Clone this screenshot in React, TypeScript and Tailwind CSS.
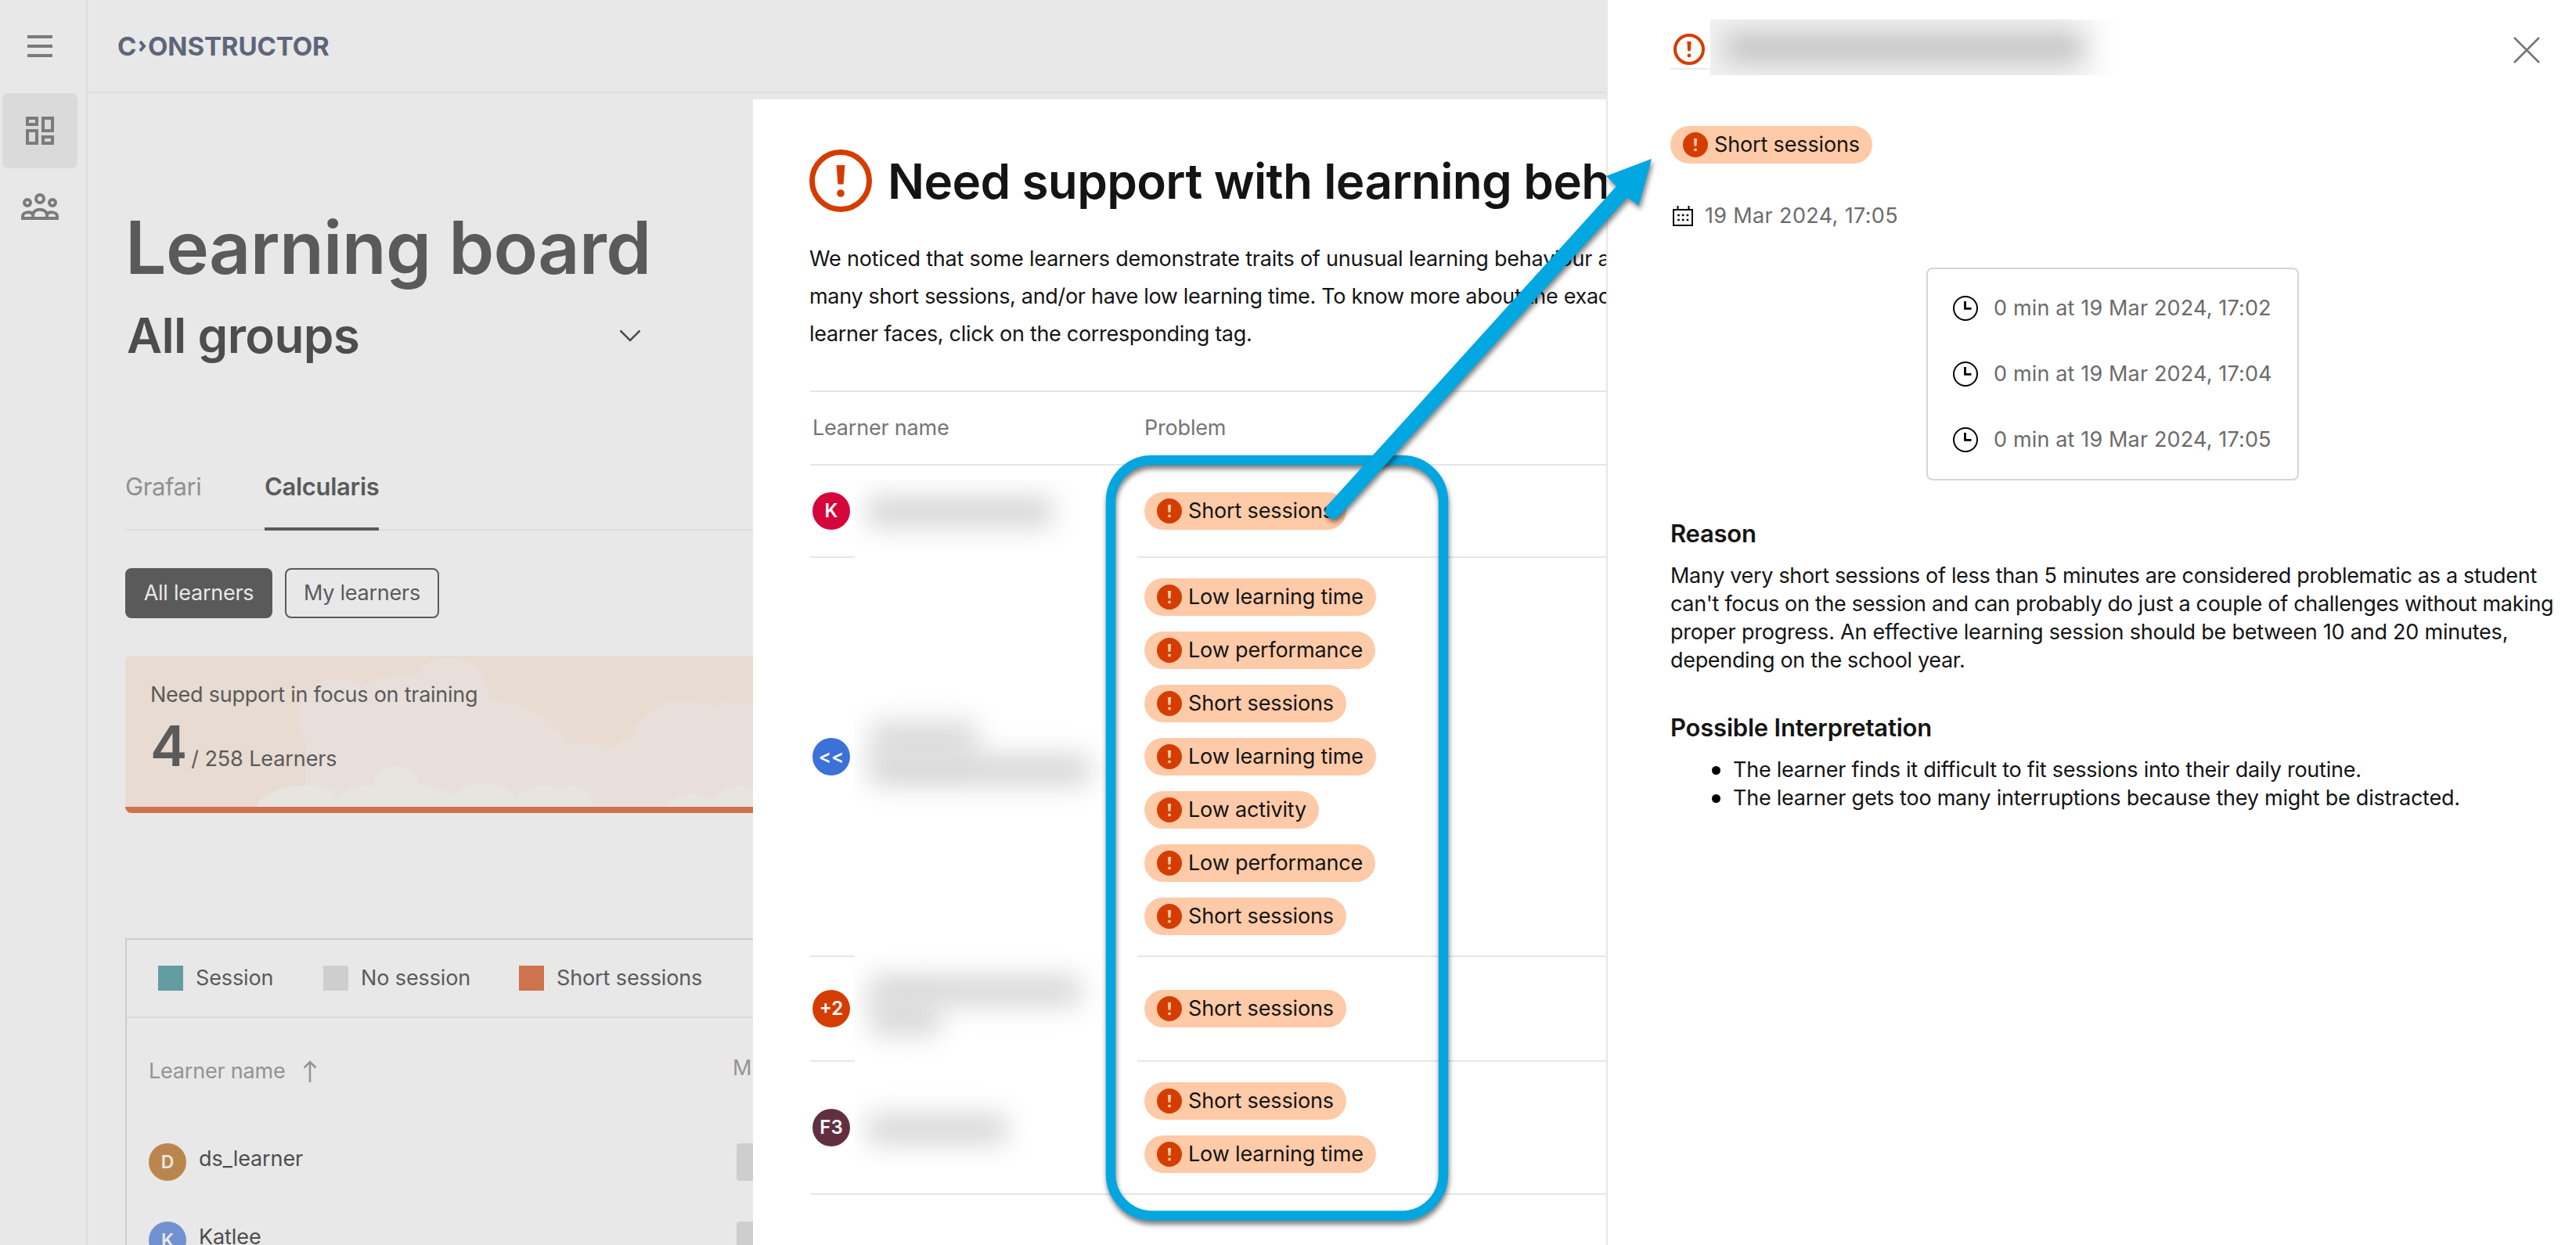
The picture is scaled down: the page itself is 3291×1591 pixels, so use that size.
type Learner = {
  initials: string;
  avatar: string;
  row: string;
  tags: string[];
};

const learners: Learner[] = [
  { initials: "K", avatar: "bg-[#d4063b]", row: "h-[118px]", tags: ["Short sessions"] },
  {
    initials: "<<",
    avatar: "bg-[#3c71d9]",
    row: "h-[510px]",
    tags: ["Low learning time", "Low performance", "Short sessions", "Low learning time", "Low activity", "Low performance", "Short sessions"],
  },
  { initials: "+2", avatar: "bg-[#d53d00]", row: "h-[134px]", tags: ["Short sessions"] },
  { initials: "F3", avatar: "bg-[#622f42]", row: "h-[170px]", tags: ["Short sessions", "Low learning time"] },
];

const legend = [
  { label: "Session", color: "bg-[#649ca4]", width: "w-[211px]" },
  { label: "No session", color: "bg-[#cecece]", width: "w-[250px]" },
  { label: "Short sessions", color: "bg-[#cf724e]", width: "w-[260px]" },
];

const boardRows = [
  { initial: "D", name: "ds_learner", color: "bg-[#bb864d]" },
  { initial: "K", name: "Katlee", color: "bg-[#7191d0]" },
];

const sessions = ["0 min at 19 Mar 2024, 17:02", "0 min at 19 Mar 2024, 17:04", "0 min at 19 Mar 2024, 17:05"];

function ExclamationMark() {
  return (
    <g>
      <path d="M17.3 10h5.4l-.9 12.3h-3.6z" />
      <circle cx="20" cy="28" r="2.4" />
    </g>
  );
}

function AlertOutline({ className, stroke }: { className: string; stroke: number }) {
  return (
    <svg viewBox="0 0 40 40" className={className} fill="#d53d00">
      <circle cx="20" cy="20" r={20 - stroke / 2} fill="none" stroke="#d53d00" strokeWidth={stroke} />
      <ExclamationMark />
    </svg>
  );
}

function Tag({ label }: { label: string }) {
  return (
    <div className="flex h-12 w-fit items-center gap-2 rounded-full bg-[#ffcaa7] px-4">
      <svg viewBox="0 0 40 40" className="size-8 shrink-0" fill="#ffcaa7">
        <circle cx="20" cy="20" r="20" fill="#d53d00" />
        <ExclamationMark />
      </svg>
      <span className="whitespace-nowrap text-[27px] leading-10 tracking-[-0.15px] text-[#141414]">{label}</span>
    </div>
  );
}

function Sidebar() {
  return (
    <aside className="flex w-28 shrink-0 flex-col border-r-2 border-[#dcdcdc] text-[#7b7b7b]">
      <div className="flex h-[119px] flex-col gap-2 pl-[35px] pt-[45px]">
        <div className="h-1 w-8 bg-[#7b7b7b]" />
        <div className="h-1 w-8 bg-[#7b7b7b]" />
        <div className="h-1 w-8 bg-[#7b7b7b]" />
      </div>
      <div className="ml-[3px] flex size-24 items-center justify-center rounded-lg bg-[#dadada]">
        <svg viewBox="0 0 36 36" className="size-9" fill="none" stroke="currentColor" strokeWidth="4">
          <path d="M2 2h12v8H2zM22 2h12v16H22zM2 18h12v16H2zM22 26h12v8H22z" />
        </svg>
      </div>
      <svg viewBox="0 0 48 34" className="ml-[27px] mt-8 h-[34px] w-12" fill="none" stroke="currentColor" strokeWidth="4">
        <circle cx="24" cy="7" r="5" />
        <circle cx="8" cy="12" r="4" />
        <circle cx="40" cy="12" r="4" />
        <path d="M2 32v-3c0-5 11-7 13.500-1M46 32v-3c0-5-11-7-13.500-1M15 32v-5c2-8.500 16-8.500 18 0v5M0 32h48" />
      </svg>
    </aside>
  );
}

function Clouds() {
  return (
    <svg viewBox="0 0 802 193" className="absolute left-0 top-0 h-[193px] w-[802px]">
      <path
        fill="#e8dfda"
        d="M232 193C229 170 230 140 232 116C218 88 217 55 235 44C250 25 285 25 301 40C318 28 350 23 372 26C380 10 395 2 414 2C442 2 468 25 464 56C512 60 550 82 569 115C588 111 612 112 625 119C630 110 638 105 649 103C660 65 700 48 752 65C768 58 788 58 802 65V193Z"
      />
      <path
        fill="#e8e4df"
        d="M167 193C182 162 255 155 272 183C280 170 298 166 317 165C322 134 370 134 376 164C396 166 408 170 419 179C435 157 485 157 499 183C510 167 538 162 555 171C575 161 594 168 598 193ZM691 193C703 175 735 172 752 186C760 165 785 162 802 172V193Z"
      />
    </svg>
  );
}

function Board() {
  return (
    <main className="flex flex-1 flex-col">
      <header className="flex h-[119px] shrink-0 items-center border-b-2 border-[#dcdcdc] pl-[38px] text-[33px] font-bold leading-10 text-[#5e6579]">
        <span className="w-[28px]">C</span>
        <svg viewBox="0 0 9 14" className="mr-0.5 h-3.5 w-[9px]" fill="none" stroke="currentColor" strokeWidth="4">
          <path d="M1 1l5 6-5 6" />
        </svg>
        <span className="tracking-[-0.1px]">ONSTRUCTOR</span>
      </header>

      <div className="flex flex-col pl-12 pt-[141px]">
        <h1 className="text-[93px] font-semibold leading-[112px] tracking-[-0.7px] text-[#5a5a5a]">Learning board</h1>
        <div className="mt-[19px] flex h-[76px] w-[659px] items-center justify-between pl-0.5">
          <h2 className="text-[62px] font-semibold leading-[76px] tracking-[-0.65px] text-[#4d4d4d]">All groups</h2>
          <svg viewBox="0 0 28 16" className="h-4 w-7" fill="none" stroke="#4d4d4d" strokeWidth="2.500">
            <path d="M1.500 1.500L14 14 26.500 1.500" />
          </svg>
        </div>

        <nav className="mt-[135px] flex h-[76px] border-b-2 border-[#dcdcdc] text-[31px] leading-10">
          <span className="w-[178px] tracking-[-0.4px] text-[#909090]">Grafari</span>
          <span className="-mb-0.5 h-[76px] border-b-4 border-[#5a5a5a] font-semibold tracking-[-0.3px] text-[#5a5a5a]">Calcularis</span>
        </nav>

        <div className="mt-12 flex gap-4 text-[27px] leading-10 tracking-[-0.25px]">
          <button className="flex h-16 w-[188px] items-center justify-center rounded-lg bg-[#5a5a5a] text-[#e8e8e8]">All learners</button>
          <button className="flex h-16 w-[197px] items-center justify-center rounded-lg border-2 border-[#5a5a5a] text-[#5a5a5a]">My learners</button>
        </div>

        <section className="relative mt-12 h-[201px] overflow-hidden rounded-lg border-b-8 border-[#cf724e] bg-[#e8dbd1] text-[#5a5a5a]">
          <Clouds />
          <div className="relative pl-8 pt-[30px]">
            <p className="text-[27px] leading-10 tracking-[-0.25px]">Need support in focus on training</p>
            <div className="mt-[5px] flex items-baseline gap-[5px]">
              <span className="text-[71px] font-semibold leading-[80px]">4</span>
              <span className="text-[27px] leading-10 tracking-[-0.1px]">/ 258 Learners</span>
            </div>
          </div>
        </section>

        <section className="mt-40 border-l-2 border-t-2 border-[#cdcdcd]">
          <div className="flex h-[100px] items-center border-b-2 border-[#dadada] pl-10">
            {legend.map((item) => (
              <div key={item.label} className={`flex items-center gap-4 ${item.width}`}>
                <div className={`size-8 ${item.color}`} />
                <span className="text-[27px] leading-10 tracking-[-0.12px] text-[#5a5a5a]">{item.label}</span>
              </div>
            ))}
          </div>
          <div className="flex h-[134px] pl-7 text-[27px] leading-10 tracking-[-0.2px] text-[#939393]">
            <div className="flex w-[746px] items-start pt-12">
              Learner name
              <svg viewBox="0 0 18 28" className="ml-[22px] mt-1.5 h-7 w-[18px]" fill="none" stroke="currentColor" strokeWidth="2.500">
                <path d="M9 28V2M1.500 9.500L9 2l7.500 7.500" />
              </svg>
            </div>
            <span className="pt-11">M</span>
          </div>
          {boardRows.map((row) => (
            <div key={row.name} className="flex h-[100px] items-center pl-7">
              <div className={`flex size-12 items-center justify-center rounded-full text-[23px] font-semibold text-[#e8e8e8] ${row.color}`}>{row.initial}</div>
              <span className="w-[703px] pb-2 pl-4 text-[27px] leading-10 tracking-[-0.1px] text-[#4d4d4d]">{row.name}</span>
              <div className="h-12 w-20 rounded bg-[#cecece]" />
            </div>
          ))}
        </section>
      </div>
    </main>
  );
}

// Covers the learner names with a smudge
function RedactedNames() {
  return (
    <div className="absolute left-[57px] top-[112px] h-[878px] w-[361px] overflow-hidden bg-white">
      <div className="absolute left-4 top-[23px] h-[36px] w-[236px] bg-[#d2d2d2] blur-[17px]" />
      <div className="absolute left-5 top-[308px] h-[52px] w-[136px] bg-[#dcdcdc] blur-[17px]" />
      <div className="absolute left-5 top-[352px] h-[38px] w-[280px] bg-[#d4d4d4] blur-[17px]" />
      <div className="absolute left-5 top-[635px] h-[36px] w-[268px] bg-[#d4d4d4] blur-[17px]" />
      <div className="absolute left-5 top-[664px] h-[46px] w-[88px] bg-[#d8d8d8] blur-[17px]" />
      <div className="absolute left-4 top-[812px] h-[36px] w-[178px] bg-[#d4d4d4] blur-[17px]" />
    </div>
  );
}

function SupportModal() {
  return (
    <div className="absolute left-[962px] top-[127px] h-[1464px] w-[1400px] bg-white pl-[72px] pt-16 text-[#141414]">
      <div className="flex h-20 items-center gap-5">
        <AlertOutline className="size-20 shrink-0" stroke={3.5} />
        <h2 className="whitespace-nowrap pt-0.5 text-[62px] font-semibold leading-[80px] tracking-[-0.65px]">Need support with learning behaviour</h2>
      </div>
      <p className="mt-9 whitespace-nowrap text-[27px] leading-[48px] tracking-[-0.31px]">
        <span className="tracking-[-0.2px]">We noticed that some learners demonstrate traits of unusual learning behaviour and</span>
        <br />
        many short sessions, and/or have low learning time. To know more about the exact
        <br />
        learner faces, click on the corresponding tag.
      </p>

      <div className="relative ml-px mt-12 border-t-2 border-[#e6e6e6]">
        <div className="flex h-[94px] items-center border-b-2 border-[#e6e6e6] pl-[3px] text-[27px] leading-10 tracking-[-0.2px] text-[#757575]">
          <span className="w-[424px]">Learner name</span>
          <span>Problem</span>
        </div>
        {learners.map((learner) => (
          <div key={learner.initials} className={`flex items-center border-b-2 border-[#e6e6e6] pl-[3px] ${learner.row}`}>
            <div className="w-[424px]">
              <div className={`flex size-12 items-center justify-center rounded-full text-[24px] font-semibold leading-none text-white ${learner.avatar}`}>
                {learner.initials}
              </div>
            </div>
            <div className="flex flex-col gap-5">
              {learner.tags.map((tag, i) => (
                <Tag key={i} label={tag} />
              ))}
            </div>
          </div>
        ))}
        <RedactedNames />
      </div>
    </div>
  );
}

function Drawer() {
  return (
    <aside className="absolute left-[2052px] top-0 h-[1591px] w-[1239px] border-l-2 border-[#e7e7e7] bg-white pl-20 pt-[25px] text-[#141414]">
      <div className="flex h-[71px]">
        <div className="w-[51px] pt-[18px]">
          <AlertOutline className="ml-1 size-10" stroke={4} />
          <div className="mt-1 h-0.5 bg-[#ebebeb]" />
        </div>
        <div className="relative h-[71px] w-[521px] overflow-hidden bg-gradient-to-r from-[#f1f1f1] via-[#f1f1f1] via-85% to-white">
          <div className="absolute left-5 top-[18px] h-9 w-[456px] bg-[#c2c2c2] blur-[16px]" />
        </div>
        <svg viewBox="0 0 34 34" className="ml-auto mr-[46px] mt-[22px] size-[34px]" fill="none" stroke="#757575" strokeWidth="2.500">
          <path d="M1 1l32 32M33 1L1 33" />
        </svg>
      </div>

      <div className="mt-[65px]">
        <Tag label="Short sessions" />
      </div>

      <div className="mt-[47px] flex h-10 items-center">
        <svg viewBox="0 0 28 28" className="ml-0.5 size-7" fill="none" stroke="black" strokeWidth="2">
          <path d="M2 6h24v20H2zM7.500 1v5M21.500 1v5" />
          <path strokeWidth="2.600" d="M7.200 13h2.600M12.900 13h2.600M18.600 13h2.600M7.200 19h2.600M12.900 19h2.600M18.600 19h2.600" />
        </svg>
        <span className="ml-3.5 text-[27px] leading-10 tracking-[0.35px] text-[#6b6b6b]">19 Mar 2024, 17:05</span>
      </div>

      <div className="ml-[327px] mt-[46px] flex h-[272px] w-[476px] flex-col gap-[52px] rounded-lg border-2 border-[#d6d6d6] pl-8 pt-[34px]">
        {sessions.map((session) => (
          <div key={session} className="flex h-8 items-center gap-5">
            <svg viewBox="0 0 32 32" className="size-8" fill="none" stroke="black" strokeWidth="2">
              <circle cx="16" cy="16" r="15" />
              <path strokeWidth="2.800" d="M15.500 7v9.300h8" />
            </svg>
            <span className="text-[27px] leading-8 tracking-[0.15px] text-[#6b6b6b]">{session}</span>
          </div>
        ))}
      </div>

      <h3 className="mt-12 text-[31px] font-semibold leading-10 tracking-[-0.25px]">Reason</h3>
      <p className="mt-4 whitespace-nowrap text-[27px] leading-9 tracking-[-0.32px]">
        Many very short sessions of less than 5 minutes are considered problematic as a student
        <br />
        can't focus on the session and can probably do just a couple of challenges without making
        <br />
        <span className="tracking-[-0.22px]">proper progress. An effective learning session should be between 10 and 20 minutes,</span>
        <br />
        depending on the school year.
      </p>

      <h3 className="mt-12 text-[31px] font-semibold leading-10 tracking-[-0.2px]">Possible Interpretation</h3>
      <ul className="mt-4 flex flex-col whitespace-nowrap pl-[53px] text-[27px] leading-9 tracking-[-0.24px]">
        <li className="flex items-center gap-4">
          <span className="size-[11px] rounded-full bg-black" />
          The learner finds it difficult to fit sessions into their daily routine.
        </li>
        <li className="flex items-center gap-4">
          <span className="size-[11px] rounded-full bg-black" />
          The learner gets too many interruptions because they might be distracted.
        </li>
      </ul>
    </aside>
  );
}

// Blue frame around the tags and the arrow that leads to the drawer
function Annotation() {
  return (
    <svg viewBox="0 0 3291 1591" className="pointer-events-none absolute left-0 top-0 h-[1591px] w-[3291px]">
      <rect
        x="1419"
        y="588"
        width="425"
        height="965.500"
        rx="53"
        fill="none"
        stroke="#04a6e0"
        strokeWidth="12.500"
        className="drop-shadow-[1px_5px_3px_rgba(0,0,0,0.5)]"
      />
      <g className="drop-shadow-[2px_4px_3px_rgba(0,0,0,0.5)]" fill="#00a7e1">
        <path d="M1703 653L2074 243" stroke="#00a7e1" strokeWidth="20" strokeLinecap="round" />
        <path d="M2110 203L2052 225L2065 238L2079 252L2093.500 263Z" />
      </g>
    </svg>
  );
}

export default function App() {
  return (
    <div className="relative flex h-[1591px] w-[3291px] overflow-hidden bg-[#e8e8e8] font-['Inter','Liberation_Sans',sans-serif]">
      <Sidebar />
      <Board />
      <SupportModal />
      <Drawer />
      <Annotation />
    </div>
  );
}
